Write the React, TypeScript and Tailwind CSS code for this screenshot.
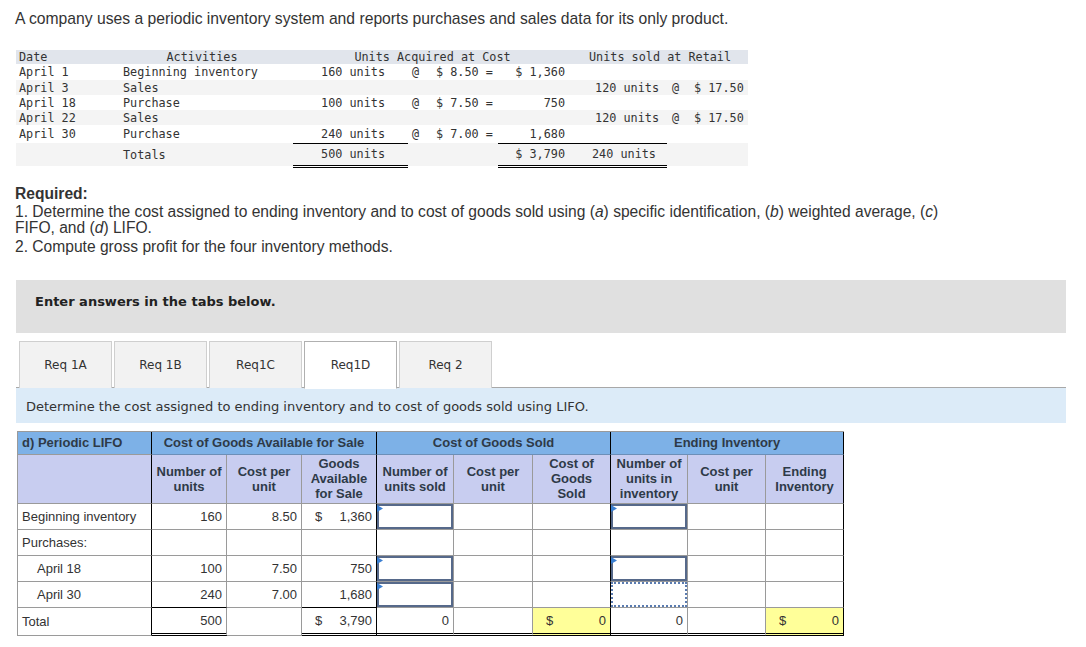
import React from "react";

const mono = "font-['DejaVu_Sans_Mono','Liberation_Mono',monospace]";

function Tri() {
  return (
    <svg className="absolute left-[-2px] top-[-1px]" width="6" height="7" viewBox="0 0 6 7">
      <polygon points="0,0 6,3.5 0,7" fill="#3b7fd1" />
    </svg>
  );
}

function InputBox({ dotted }: { dotted?: boolean }) {
  return (
    <div
      className={
        dotted
          ? "relative h-[25px] border-2 border-dotted border-[#5a7bb0] bg-white"
          : "relative h-[25px] border-2 border-[#56698a] bg-white"
      }
    >
      {!dotted && <Tri />}
    </div>
  );
}

type TdProps = {
  children?: React.ReactNode;
  heavy?: boolean;
  right?: boolean;
  cls?: string;
  blackBottom?: boolean;
  dbl?: boolean;
};

function Td({ children, heavy, right, cls = "", blackBottom, dbl }: TdProps) {
  const r = heavy ? "border-r border-r-black" : "border-r border-r-[#9a9a9a]";
  const b = dbl
    ? "border-b-[3px] border-b-black border-double"
    : blackBottom
    ? "border-b border-b-black"
    : "border-b border-b-[#9a9a9a]";
  const a = right ? "text-right pr-[4px]" : "";
  return <td className={`${r} ${b} ${a} p-0 align-middle ${cls}`}>{children}</td>;
}

function Dollar({ v }: { v: string }) {
  return (
    <div className="flex items-center justify-between pl-[13px] pr-[4px]">
      <span>$</span>
      <span>{v}</span>
    </div>
  );
}

function YellowDollar({ v }: { v: string }) {
  return (
    <div className="flex h-[25px] w-full items-center justify-between bg-[#ffff99] pl-[13px] pr-[4px]">
      <span>$</span>
      <span>{v}</span>
    </div>
  );
}

export default function App() {
  return (
    <div className="w-[1086px] h-[647px] overflow-hidden bg-white text-[#333] font-['Liberation_Sans',Arial,sans-serif]">
      <p className="pt-[10px] pl-[15px] text-[15.7px] leading-[18px] text-[#333]">
        A company uses a periodic inventory system and reports purchases and sales data for its only product.
      </p>

      <table
        className={`ml-[16px] mt-[22px] w-[732px] table-fixed border-collapse ${mono} text-[11.8px] leading-[14px] text-[#333]`}
      >
        <colgroup>
          <col className="w-[107px]" />
          <col className="w-[170px]" />
          <col className="w-[115px]" />
          <col className="w-[22px]" />
          <col className="w-[68px]" />
          <col className="w-[74px]" />
          <col className="w-[95px]" />
          <col className="w-[23px]" />
          <col className="w-[58px]" />
        </colgroup>
        <tbody>
          <tr className="h-[14px] bg-[#e1e5ec]">
            <td className="p-0 pl-[3px]">Date</td>
            <td className="p-0 pr-[12px] text-center">Activities</td>
            <td className="p-0 text-center" colSpan={4}>Units Acquired at Cost</td>
            <td className="p-0 text-center" colSpan={3}>Units sold at Retail</td>
          </tr>
          <tr className="h-[16px]">
            <td className="p-0 pl-[3px]">April 1</td>
            <td className="p-0">Beginning inventory</td>
            <td className="p-0 pr-[23px] text-right">160 units</td>
            <td className="p-0 pl-[4px]">@</td>
            <td className="p-0 pl-[6px] whitespace-pre">$ 8.50 =</td>
            <td className="p-0 pr-[7px] text-right whitespace-pre">$ 1,360</td>
            <td className="p-0"></td>
            <td className="p-0"></td>
            <td className="p-0"></td>
          </tr>
          <tr className="h-[15px] bg-[#f4f4f4]">
            <td className="p-0 pl-[3px]">April 3</td>
            <td className="p-0">Sales</td>
            <td className="p-0"></td>
            <td className="p-0"></td>
            <td className="p-0"></td>
            <td className="p-0"></td>
            <td className="p-0 pr-[8px] text-right">120 units</td>
            <td className="p-0 pl-[5px]">@</td>
            <td className="p-0 pl-[4px] whitespace-pre">$ 17.50</td>
          </tr>
          <tr className="h-[15px]">
            <td className="p-0 pl-[3px]">April 18</td>
            <td className="p-0">Purchase</td>
            <td className="p-0 pr-[23px] text-right">100 units</td>
            <td className="p-0 pl-[4px]">@</td>
            <td className="p-0 pl-[6px] whitespace-pre">$ 7.50 =</td>
            <td className="p-0 pr-[7px] text-right">750</td>
            <td className="p-0"></td>
            <td className="p-0"></td>
            <td className="p-0"></td>
          </tr>
          <tr className="h-[15px] bg-[#f4f4f4]">
            <td className="p-0 pl-[3px]">April 22</td>
            <td className="p-0">Sales</td>
            <td className="p-0"></td>
            <td className="p-0"></td>
            <td className="p-0"></td>
            <td className="p-0"></td>
            <td className="p-0 pr-[8px] text-right">120 units</td>
            <td className="p-0 pl-[5px]">@</td>
            <td className="p-0 pl-[4px] whitespace-pre">$ 17.50</td>
          </tr>
          <tr className="h-[18px]">
            <td className="p-0 pl-[3px]">April 30</td>
            <td className="p-0">Purchase</td>
            <td className="p-0 pr-[23px] text-right border-b border-black">240 units</td>
            <td className="p-0 pl-[4px]">@</td>
            <td className="p-0 pl-[6px] whitespace-pre">$ 7.00 =</td>
            <td className="p-0 pr-[7px] text-right border-b border-black">1,680</td>
            <td className="p-0 border-b border-black"></td>
            <td className="p-0"></td>
            <td className="p-0"></td>
          </tr>
          <tr className="h-[23px] bg-[#f4f4f4]">
            <td className="p-0 pl-[3px]"></td>
            <td className="p-0">Totals</td>
            <td className="p-0 pr-[23px] text-right border-b-[3px] border-double border-black">500 units</td>
            <td className="p-0"></td>
            <td className="p-0"></td>
            <td className="p-0 pr-[7px] text-right whitespace-pre border-b-[3px] border-double border-black">$ 3,790</td>
            <td className="p-0 pl-[20px] text-left border-b-[3px] border-double border-black">240 units</td>
            <td className="p-0"></td>
            <td className="p-0"></td>
          </tr>
        </tbody>
      </table>

      <div className="mt-[17px] pl-[15px] text-[15.6px] text-[#333]">
        <p className="font-bold leading-[18px]">Required:</p>
        <p className="mt-[1px] leading-[16px]">
          1. Determine the cost assigned to ending inventory and to cost of goods sold using (<i>a</i>) specific
          identification, (<i>b</i>) weighted average, (<i>c</i>)
          <br />
          FIFO, and (<i>d</i>) LIFO.
        </p>
        <p className="mt-[3px] leading-[16px]">2. Compute gross profit for the four inventory methods.</p>
      </div>

      <div className="ml-[16px] mt-[25px] h-[53px] w-[1050px] bg-[#e0e0e0] pl-[19px] pt-[14px] font-['DejaVu_Sans',Verdana,sans-serif] text-[13px] font-bold leading-[16px] text-[#222]">
        Enter answers in the tabs below.
      </div>

      <div className="ml-[16px] mt-[8px] flex h-[47px] w-[1050px] gap-[2px] border-b border-[#a8a8a8] pl-[3px] font-['DejaVu_Sans',Verdana,sans-serif] text-[12px] text-[#333]">
        {["Req 1A", "Req 1B", "Req1C", "Req1D", "Req 2"].map((t) =>
          t === "Req1D" ? (
            <div
              key={t}
              className="-mb-px flex h-[48px] w-[93px] items-center justify-center border border-[#b0b0b0] border-b-white bg-white"
            >
              {t}
            </div>
          ) : (
            <div
              key={t}
              className="flex h-[47px] w-[93px] items-center justify-center border border-b-0 border-[#cfcfcf] bg-[#f2f2f2]"
            >
              {t}
            </div>
          )
        )}
      </div>

      <div className="ml-[16px] h-[35px] w-[1050px] bg-[#dcebf8] pl-[10px] pt-[11px] font-['DejaVu_Sans',Verdana,sans-serif] text-[13px] leading-[16px] text-[#333]">
        Determine the cost assigned to ending inventory and to cost of goods sold using LIFO.
      </div>

      <table className="ml-[17px] mt-[8px] w-[826px] table-fixed border-separate border-spacing-0 border-l border-t border-[#9a9a9a] text-[13px] leading-[15px] text-[#333]">
        <colgroup>
          <col className="w-[134px]" />
          <col className="w-[75px]" />
          <col className="w-[75px]" />
          <col className="w-[75px]" />
          <col className="w-[77px]" />
          <col className="w-[79px]" />
          <col className="w-[78px]" />
          <col className="w-[77px]" />
          <col className="w-[78px]" />
          <col className="w-[78px]" />
        </colgroup>
        <tbody>
          <tr className="h-[23px] bg-[#7db1e7] font-bold text-[#2e3a48]">
            <Td heavy cls="pl-[4px] text-left">d) Periodic LIFO</Td>
            <td colSpan={3} className="border-r border-b border-r-black border-b-[#6c8fb8] p-0 text-center">
              Cost of Goods Available for Sale
            </td>
            <td colSpan={3} className="border-r border-b border-r-black border-b-[#6c8fb8] p-0 text-center">
              Cost of Goods Sold
            </td>
            <td colSpan={3} className="border-r border-b border-r-black border-b-[#6c8fb8] p-0 text-center">
              Ending Inventory
            </td>
          </tr>
          <tr className="h-[49px] bg-[#c8cdf0] text-center font-bold text-[#2e3a48]">
            <Td heavy></Td>
            <Td>Number of<br />units</Td>
            <Td>Cost per<br />unit</Td>
            <Td heavy>Goods<br />Available<br />for Sale</Td>
            <Td>Number of<br />units sold</Td>
            <Td>Cost per<br />unit</Td>
            <Td heavy>Cost of<br />Goods<br />Sold</Td>
            <Td>Number of<br />units in<br />inventory</Td>
            <Td>Cost per<br />unit</Td>
            <Td heavy>Ending<br />Inventory</Td>
          </tr>
          <tr className="h-[26px]">
            <Td heavy cls="pl-[4px]">Beginning inventory</Td>
            <Td right>160</Td>
            <Td right>8.50</Td>
            <Td heavy><Dollar v="1,360" /></Td>
            <Td><InputBox /></Td>
            <Td></Td>
            <Td heavy></Td>
            <Td><InputBox /></Td>
            <Td></Td>
            <Td heavy></Td>
          </tr>
          <tr className="h-[26px]">
            <Td heavy cls="pl-[4px]">Purchases:</Td>
            <Td></Td>
            <Td></Td>
            <Td heavy></Td>
            <Td></Td>
            <Td></Td>
            <Td heavy></Td>
            <Td></Td>
            <Td></Td>
            <Td heavy></Td>
          </tr>
          <tr className="h-[26px]">
            <Td heavy cls="pl-[19px]">April 18</Td>
            <Td right>100</Td>
            <Td right>7.50</Td>
            <Td heavy right>750</Td>
            <Td><InputBox /></Td>
            <Td></Td>
            <Td heavy></Td>
            <Td><InputBox /></Td>
            <Td></Td>
            <Td heavy></Td>
          </tr>
          <tr className="h-[26px]">
            <Td heavy cls="pl-[19px]">April 30</Td>
            <Td right blackBottom>240</Td>
            <Td right>7.00</Td>
            <Td heavy right blackBottom>1,680</Td>
            <Td><InputBox /></Td>
            <Td></Td>
            <Td heavy></Td>
            <Td><InputBox dotted /></Td>
            <Td></Td>
            <Td heavy></Td>
          </tr>
          <tr className="h-[28px]">
            <Td heavy cls="pl-[4px]">Total</Td>
            <Td right dbl>500</Td>
            <Td></Td>
            <Td heavy dbl><Dollar v="3,790" /></Td>
            <Td right dbl>0</Td>
            <Td dbl></Td>
            <Td heavy dbl cls="bg-[#ffff99]"><YellowDollar v="0" /></Td>
            <Td right dbl>0</Td>
            <Td dbl></Td>
            <Td heavy dbl cls="bg-[#ffff99]"><YellowDollar v="0" /></Td>
          </tr>
        </tbody>
      </table>
    </div>
  );
}
